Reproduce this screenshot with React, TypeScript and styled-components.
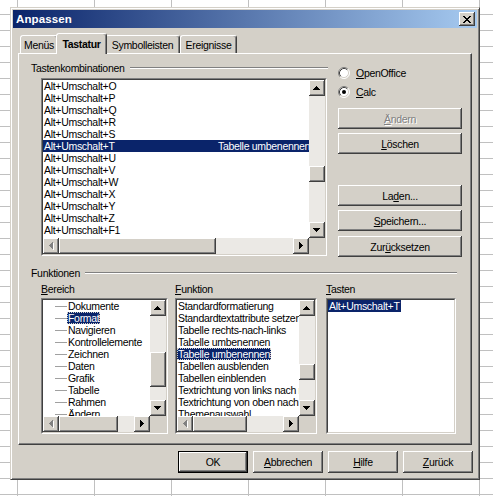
import React from "react";
import styled, { createGlobalStyle, css } from "styled-components";

// classic 3D palette
const face = "#D4D0C8";
const shadow = "#808080";
const dark = "#404040";
const navy = "#0A246A";

const GlobalStyle = createGlobalStyle`
  html, body {
    margin: 0;
    padding: 0;
  }
  body {
    font-family: "Liberation Sans", Arial, sans-serif;
    font-size: 10.5px;
    letter-spacing: -0.3px;
    color: #000;
  }
  * {
    box-sizing: border-box;
  }
`;

const raised = css`
  background: ${face};
  box-shadow: inset -1px -1px ${dark}, inset 1px 1px #fff,
    inset -2px -2px ${shadow};
`;

const Desktop = styled.div`
  width: 493px;
  height: 496px;
  padding: 7px 0 0 10px;
  overflow: hidden;
  background-color: #fff;
  background-image: linear-gradient(to right, #c0c0c0 0 1px, transparent 1px),
    linear-gradient(to bottom, #c0c0c0 0 1px, transparent 1px);
  background-size: 77px 100%, 100% 16px;
  background-position: 17px 0, 0 14px;
`;

const Window = styled.div`
  width: 470px;
  height: 473px;
  display: flex;
  flex-direction: column;
  padding: 2px;
  background: ${face};
  border: 1px solid;
  border-color: ${face} ${dark} ${dark} ${face};
  box-shadow: inset 1px 1px #fff, inset -1px -1px ${shadow};
`;

const TitleBar = styled.div`
  flex: none;
  height: 18px;
  display: flex;
  align-items: center;
  padding: 0 2px;
  background: linear-gradient(to right, ${navy}, #a6caf0);
`;

const Title = styled.span`
  flex: 1;
  padding-left: 1px;
  color: #fff;
  font-weight: bold;
  font-size: 11.5px;
  letter-spacing: 0.1px;
`;

const CloseButton = styled.div`
  width: 16px;
  height: 14px;
  display: flex;
  align-items: center;
  justify-content: center;
  padding-right: 1px;
  ${raised}
`;

const DialogBody = styled.div`
  flex: 1;
  display: flex;
  flex-direction: column;
  padding: 5px 5px 4px;
`;

const TabStrip = styled.div`
  height: 20px;
  display: flex;
  align-items: flex-end;
  padding-left: 2px;
`;

const Tab = styled.div<{ $active?: boolean; $w: number }>`
  flex: none;
  width: ${(p) => p.$w}px;
  height: 18px;
  display: flex;
  justify-content: center;
  align-items: center;
  white-space: nowrap;
  background: ${face};
  border: 1px solid;
  border-bottom: none;
  border-color: #fff ${dark} transparent #fff;
  border-radius: 3px 3px 0 0;
  box-shadow: inset -1px 0 ${shadow};
  ${(p) =>
    p.$active &&
    css`
      position: relative;
      z-index: 1;
      width: ${p.$w + 4}px;
      height: 21px;
      margin: 0 -2px -1px;
      font-weight: bold;
    `}
`;

const TabPanel = styled.div`
  height: 392px;
  display: flex;
  flex-direction: column;
  padding: 8px 9px 9px 12px;
  border: 1px solid;
  border-color: #fff ${dark} ${dark} #fff;
  box-shadow: inset -1px -1px ${shadow};
`;

const KeysSection = styled.div`
  display: flex;
  gap: 10px;
`;

const LeftColumn = styled.div`
  width: 297px;
  display: flex;
  flex-direction: column;
  gap: 4px;
`;

const RightColumn = styled.div`
  width: 124px;
  display: flex;
  flex-direction: column;
  padding-top: 4px;
`;

const GroupHeader = styled.div<{ $w?: number }>`
  height: 12px;
  display: flex;
  align-items: center;
  gap: 5px;
  ${(p) => p.$w && `width: ${p.$w}px;`}
`;

const GroupLabel = styled.span`
  line-height: 12px;
  white-space: nowrap;
`;

const Etch = styled.div`
  flex: 1;
  height: 2px;
  border-top: 1px solid ${shadow};
  border-bottom: 1px solid #fff;
`;

const Indent = styled.div<{ $left: number }>`
  margin-left: ${(p) => p.$left}px;
`;

const Sunken = styled.div<{ $w: number; $h: number }>`
  width: ${(p) => p.$w}px;
  height: ${(p) => p.$h}px;
  border: 1px solid;
  border-color: ${shadow} #fff #fff ${shadow};
`;

const SunkenInner = styled.div<{ $bars: boolean }>`
  height: 100%;
  border: 1px solid;
  border-color: ${dark} ${face} ${face} ${dark};
  background: #fff;
  overflow: hidden;
  display: grid;
  grid-template-columns: ${(p) => (p.$bars ? "minmax(0, 1fr) 16px" : "minmax(0, 1fr)")};
  grid-template-rows: ${(p) => (p.$bars ? "minmax(0, 1fr) 16px" : "minmax(0, 1fr)")};
`;

const Rows = styled.div`
  min-width: 0;
  min-height: 0;
  overflow: hidden;
  display: flex;
  flex-direction: column;
`;

const KeyRow = styled.div<{ $selected?: boolean }>`
  flex: none;
  height: 12px;
  line-height: 12px;
  display: flex;
  padding-left: 1px;
  white-space: nowrap;
  ${(p) =>
    p.$selected &&
    css`
      background: ${navy};
      color: #fff;
    `}
`;

const KeyName = styled.span`
  flex: none;
  width: 174px;
`;

const TreeRow = styled.div`
  flex: none;
  height: 12px;
  line-height: 12px;
  display: flex;
  align-items: center;
  padding-left: 12px;
  white-space: nowrap;

  &::before {
    content: "";
    flex: none;
    width: 12px;
    border-top: 1px solid #a0a0a0;
  }
`;

const PlainRow = styled.div`
  flex: none;
  height: 12px;
  line-height: 12px;
  display: flex;
  white-space: nowrap;
`;

const ItemLabel = styled.span<{ $selected?: boolean; $focus?: boolean }>`
  padding: 0 1px;
  ${(p) =>
    p.$selected &&
    css`
      background: ${navy};
      color: #fff;
    `}
  ${(p) =>
    p.$focus &&
    css`
      outline: 1px dotted ${face};
      outline-offset: -1px;
    `}
`;

const VBar = styled.div`
  min-height: 0;
  display: flex;
  flex-direction: column;
`;

const HBar = styled.div`
  min-width: 0;
  display: flex;
`;

const Track = styled.div<{ $vertical?: boolean }>`
  flex: 1;
  min-width: 0;
  min-height: 0;
  display: flex;
  flex-direction: ${(p) => (p.$vertical ? "column" : "row")};
  background: #ebe9e5;
`;

const Thumb = styled.div<{ $vertical?: boolean; $pos: number; $size: number }>`
  flex: none;
  ${raised}
  ${(p) =>
    p.$vertical
      ? `margin-top: ${p.$pos}px; height: ${p.$size}px;`
      : `margin-left: ${p.$pos}px; width: ${p.$size}px;`}
`;

const ArrowBox = styled.div`
  flex: none;
  width: 16px;
  height: 16px;
  display: flex;
  align-items: center;
  justify-content: center;
  ${raised}
`;

const Corner = styled.div`
  background: ${face};
`;

const RadioRow = styled.div<{ $gap: number }>`
  height: 13px;
  display: flex;
  align-items: center;
  gap: 6px;
  margin-top: ${(p) => p.$gap}px;
  white-space: nowrap;
`;

const PushButton = styled.button<{ $w: number; $h: number; $gap?: number; $default?: boolean }>`
  appearance: none;
  flex: none;
  width: ${(p) => p.$w}px;
  height: ${(p) => p.$h}px;
  margin: ${(p) => p.$gap ?? 0}px 0 0;
  padding: 0;
  display: flex;
  align-items: center;
  justify-content: center;
  border: ${(p) => (p.$default ? "1px solid #000" : "none")};
  font: inherit;
  letter-spacing: inherit;
  color: #000;
  white-space: nowrap;
  ${raised}

  &:disabled {
    color: ${shadow};
    text-shadow: 1px 1px #fff;
  }
`;

const FunctionsSection = styled.div`
  margin-top: 10px;
  display: flex;
  flex-direction: column;
`;

const Columns = styled.div`
  display: flex;
  margin-top: 4px;
`;

const FieldColumn = styled.div<{ $offset: number }>`
  display: flex;
  flex-direction: column;
  gap: 3px;
  margin-left: ${(p) => p.$offset}px;
`;

const FieldLabel = styled.span`
  height: 12px;
  line-height: 12px;
`;

const DialogButtons = styled.div`
  display: flex;
  justify-content: flex-end;
  gap: 5px;
  margin: 6px -1px 0 0;
`;

type Dir = "up" | "down" | "left" | "right";

function arrowPath(dir: Dir): string {
  const parts: string[] = [];
  for (let i = 0; i < 4; i++) {
    const len = 7 - 2 * i;
    if (dir === "up") parts.push(`M${i} ${3 - i}h${len}v1h-${len}z`);
    if (dir === "down") parts.push(`M${i} ${i}h${len}v1h-${len}z`);
    if (dir === "left") parts.push(`M${3 - i} ${i}h1v${len}h-1z`);
    if (dir === "right") parts.push(`M${i} ${i}h1v${len}h-1z`);
  }
  return parts.join("");
}

function Arrow({ dir, disabled }: { dir: Dir; disabled?: boolean }) {
  const flat = dir === "up" || dir === "down";
  const w = flat ? 8 : 5;
  const h = flat ? 5 : 8;
  const d = arrowPath(dir);
  return (
    <ArrowBox>
      <svg width={w} height={h} viewBox={`0 0 ${w} ${h}`} shapeRendering="crispEdges">
        {disabled ? (
          <>
            <path d={d} fill="#fff" transform="translate(1 1)" />
            <path d={d} fill={shadow} />
          </>
        ) : (
          <path d={d} fill="#000" />
        )}
      </svg>
    </ArrowBox>
  );
}

const closeRows = ["11....11", ".11..11.", "..1111..", "...11...", "..1111..", ".11..11.", "11....11"];
const closePath = closeRows
  .map((row, y) =>
    row
      .split("")
      .map((c, x) => (c === "1" ? `M${x} ${y}h1v1h-1z` : ""))
      .join("")
  )
  .join("");

function RadioMark({ checked }: { checked?: boolean }) {
  return (
    <svg width="12" height="12" viewBox="0 0 12 12">
      <circle cx="6" cy="6" r="5" fill="#fff" />
      <path d="M2.11 9.89A5.5 5.5 0 0 1 9.89 2.11" stroke={shadow} fill="none" />
      <path d="M9.89 2.11A5.5 5.5 0 0 1 2.11 9.89" stroke="#fff" fill="none" />
      <path d="M2.82 9.18A4.5 4.5 0 0 1 9.18 2.82" stroke={dark} fill="none" />
      <path d="M9.18 2.82A4.5 4.5 0 0 1 2.82 9.18" stroke={face} fill="none" />
      {checked && <circle cx="6" cy="6" r="2" fill="#000" />}
    </svg>
  );
}

interface BarPos {
  pos: number;
  size: number;
}

interface ScrollListProps {
  w: number;
  h: number;
  v?: BarPos;
  hz?: BarPos;
  children: React.ReactNode;
}

function ScrollList({ w, h, v, hz, children }: ScrollListProps) {
  return (
    <Sunken $w={w} $h={h}>
      <SunkenInner $bars={Boolean(v && hz)}>
        <Rows>{children}</Rows>
        {v && hz && (
          <>
            <VBar>
              <Arrow dir="up" />
              <Track $vertical>
                <Thumb $vertical $pos={v.pos} $size={v.size} />
              </Track>
              <Arrow dir="down" />
            </VBar>
            <HBar>
              <Arrow dir="left" disabled />
              <Track>
                <Thumb $pos={hz.pos} $size={hz.size} />
              </Track>
              <Arrow dir="right" />
            </HBar>
            <Corner />
          </>
        )}
      </SunkenInner>
    </Sunken>
  );
}

const tabs = [
  { label: "Menüs", w: 38 },
  { label: "Tastatur", w: 47, active: true },
  { label: "Symbolleisten", w: 75 },
  { label: "Ereignisse", w: 57 },
];

const shortcuts = ["O", "P", "Q", "R", "S", "T", "U", "V", "W", "X", "Y", "Z", "F1", "F2"].map((k) => ({
  keys: `Alt+Umschalt+${k}`,
  action: k === "T" ? "Tabelle umbenennen" : "",
}));

const areas = [
  "Dokumente",
  "Format",
  "Navigieren",
  "Kontrollelemente",
  "Zeichnen",
  "Daten",
  "Grafik",
  "Tabelle",
  "Rahmen",
  "Ändern",
];

const functions = [
  "Standardformatierung",
  "Standardtextattribute setzen",
  "Tabelle rechts-nach-links",
  "Tabelle umbenennen",
  "Tabelle umbenennen",
  "Tabellen ausblenden",
  "Tabellen einblenden",
  "Textrichtung von links nach rechts",
  "Textrichtung von oben nach unten",
  "Themenauswahl",
];

export default function App() {
  return (
    <>
      <GlobalStyle />
      <Desktop>
        <Window>
          <TitleBar>
            <Title>Anpassen</Title>
            <CloseButton>
              <svg width="8" height="7" viewBox="0 0 8 7" shapeRendering="crispEdges">
                <path d={closePath} fill="#000" />
              </svg>
            </CloseButton>
          </TitleBar>
          <DialogBody>
            <TabStrip>
              {tabs.map((t) => (
                <Tab key={t.label} $w={t.w} $active={t.active}>
                  {t.label}
                </Tab>
              ))}
            </TabStrip>
            <TabPanel>
              <KeysSection>
                <LeftColumn>
                  <GroupHeader>
                    <GroupLabel>Tastenkombinationen</GroupLabel>
                    <Etch />
                  </GroupHeader>
                  <Indent $left={10}>
                    <ScrollList w={286} h={178} v={{ pos: 70, size: 16 }} hz={{ pos: 0, size: 157 }}>
                      {shortcuts.map((s) => (
                        <KeyRow key={s.keys} $selected={s.action !== ""}>
                          <KeyName>{s.keys}</KeyName>
                          <span>{s.action}</span>
                        </KeyRow>
                      ))}
                    </ScrollList>
                  </Indent>
                </LeftColumn>
                <RightColumn>
                  <RadioRow $gap={0}>
                    <RadioMark />
                    <span>
                      <u>O</u>penOffice
                    </span>
                  </RadioRow>
                  <RadioRow $gap={6}>
                    <RadioMark checked />
                    <span>
                      <u>C</u>alc
                    </span>
                  </RadioRow>
                  <PushButton $w={124} $h={21} $gap={10} disabled>
                    <span>
                      <u>Ä</u>ndern
                    </span>
                  </PushButton>
                  <PushButton $w={124} $h={21} $gap={4}>
                    <span>
                      <u>L</u>öschen
                    </span>
                  </PushButton>
                  <PushButton $w={124} $h={21} $gap={31}>
                    <span>
                      La<u>d</u>en...
                    </span>
                  </PushButton>
                  <PushButton $w={124} $h={21} $gap={4}>
                    <span>
                      <u>S</u>peichern...
                    </span>
                  </PushButton>
                  <PushButton $w={124} $h={21} $gap={5}>
                    <span>
                      Zur<u>ü</u>cksetzen
                    </span>
                  </PushButton>
                </RightColumn>
              </KeysSection>

              <FunctionsSection>
                <GroupHeader $w={426}>
                  <GroupLabel>Funktionen</GroupLabel>
                  <Etch />
                </GroupHeader>
                <Columns>
                  <FieldColumn $offset={10}>
                    <FieldLabel>
                      <u>B</u>ereich
                    </FieldLabel>
                    <ScrollList w={127} h={136} v={{ pos: 36, size: 35 }} hz={{ pos: 0, size: 59 }}>
                      {areas.map((a) => (
                        <TreeRow key={a}>
                          <ItemLabel $selected={a === "Format"} $focus={a === "Format"}>
                            {a}
                          </ItemLabel>
                        </TreeRow>
                      ))}
                    </ScrollList>
                  </FieldColumn>
                  <FieldColumn $offset={7}>
                    <FieldLabel>
                      <u>F</u>unktion
                    </FieldLabel>
                    <ScrollList w={142} h={136} v={{ pos: 48, size: 16 }} hz={{ pos: 0, size: 54 }}>
                      {functions.map((f, i) => (
                        <PlainRow key={`${f}-${i}`}>
                          <ItemLabel $selected={i === 4} $focus={i === 4}>
                            {f}
                          </ItemLabel>
                        </PlainRow>
                      ))}
                    </ScrollList>
                  </FieldColumn>
                  <FieldColumn $offset={9}>
                    <FieldLabel>
                      <u>T</u>asten
                    </FieldLabel>
                    <ScrollList w={130} h={136}>
                      <PlainRow>
                        <ItemLabel $selected>Alt+Umschalt+T</ItemLabel>
                      </PlainRow>
                    </ScrollList>
                  </FieldColumn>
                </Columns>
              </FunctionsSection>
            </TabPanel>

            <DialogButtons>
              <PushButton $w={70} $h={22} $default>
                OK
              </PushButton>
              <PushButton $w={70} $h={22}>
                <span>
                  <u>A</u>bbrechen
                </span>
              </PushButton>
              <PushButton $w={70} $h={22}>
                <span>
                  <u>H</u>ilfe
                </span>
              </PushButton>
              <PushButton $w={70} $h={22}>
                <span>
                  <u>Z</u>urück
                </span>
              </PushButton>
            </DialogButtons>
          </DialogBody>
        </Window>
      </Desktop>
    </>
  );
}
